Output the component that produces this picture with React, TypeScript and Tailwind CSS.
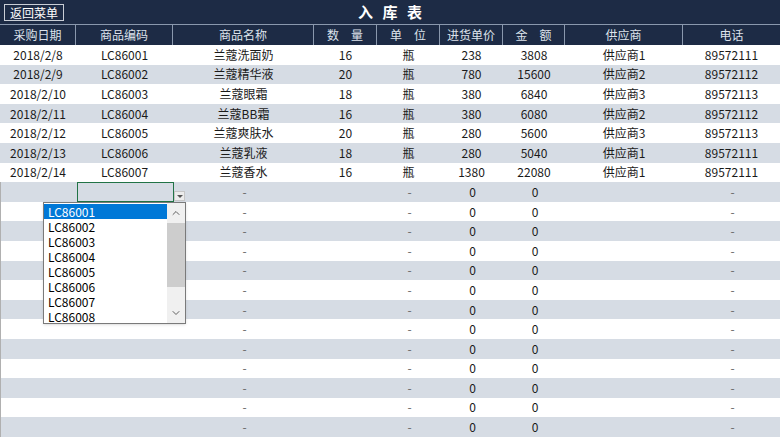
import { ChevronDown, ChevronUp } from "lucide-react";

type TRecord = {
  date: string;
  code: string;
  name: string;
  qty: number;
  unit: string;
  price: number;
  amount: number;
  supplier: string;
  phone: string;
};

const records: TRecord[] = [
  { date: "2018/2/8", code: "LC86001", name: "兰蔻洗面奶", qty: 16, unit: "瓶", price: 238, amount: 3808, supplier: "供应商1", phone: "89572111" },
  { date: "2018/2/9", code: "LC86002", name: "兰蔻精华液", qty: 20, unit: "瓶", price: 780, amount: 15600, supplier: "供应商2", phone: "89572112" },
  { date: "2018/2/10", code: "LC86003", name: "兰蔻眼霜", qty: 18, unit: "瓶", price: 380, amount: 6840, supplier: "供应商3", phone: "89572113" },
  { date: "2018/2/11", code: "LC86004", name: "兰蔻BB霜", qty: 16, unit: "瓶", price: 380, amount: 6080, supplier: "供应商2", phone: "89572112" },
  { date: "2018/2/12", code: "LC86005", name: "兰蔻爽肤水", qty: 20, unit: "瓶", price: 280, amount: 5600, supplier: "供应商3", phone: "89572113" },
  { date: "2018/2/13", code: "LC86006", name: "兰蔻乳液", qty: 18, unit: "瓶", price: 280, amount: 5040, supplier: "供应商1", phone: "89572111" },
  { date: "2018/2/14", code: "LC86007", name: "兰蔻香水", qty: 16, unit: "瓶", price: 1380, amount: 22080, supplier: "供应商1", phone: "89572111" },
];

const headers = ["采购日期", "商品编码", "商品名称", "数　量", "单　位", "进货单价", "金　额", "供应商", "电话"];

const codeOptions = ["LC86001", "LC86002", "LC86003", "LC86004", "LC86005", "LC86006", "LC86007", "LC86008"];

const emptyRows = 13;

const gridCols = "grid grid-cols-[76px_97px_141px_63px_63px_63px_62px_118px_97px]";

function CodeDropdown() {
  return (
    <div className="relative h-full border border-[#217346]">
      <div className="absolute right-[-12px] top-[8px] flex h-[10px] w-[11px] items-center justify-center border border-[#c6c6c6] bg-[#ececec]">
        <span className="block h-0 w-0 border-x-[3px] border-t-[3px] border-x-transparent border-t-[#555]" />
      </div>
      <div className="absolute left-[-35px] top-[19px] z-10 flex h-[122px] w-[143px] border border-[#7a7a7a] bg-white text-left shadow-sm">
        <div className="flex flex-1 flex-col pt-[1px]">
          {codeOptions.map((code, i) => (
            <div
              key={code}
              className={
                i === 0
                  ? "h-[15px] bg-[#0078d7] pl-[4px] text-[12px] leading-[15px] text-white"
                  : "h-[15px] pl-[4px] text-[12px] leading-[15px] text-black"
              }
            >
              {code}
            </div>
          ))}
        </div>
        <div className="flex w-[18px] flex-col bg-[#f0f0f0]">
          <div className="flex h-[20px] items-center justify-center">
            <ChevronUp className="size-[12px] text-[#606060]" strokeWidth={2} />
          </div>
          <div className="h-[64px] bg-[#cdcdcd]" />
          <div className="flex-1" />
          <div className="flex h-[20px] items-center justify-center">
            <ChevronDown className="size-[12px] text-[#606060]" strokeWidth={2} />
          </div>
        </div>
      </div>
    </div>
  );
}

export default function App() {
  return (
    <div className="h-[439px] w-[780px] overflow-hidden bg-white font-['Microsoft_YaHei','Noto_Sans_CJK_SC',sans-serif] text-[12px] text-[#1a1a1a]">
      <div className="relative flex h-[25px] items-center justify-center border-b border-[#8a98ad] bg-[#1d2b45]">
        <button className="absolute left-[4px] top-[4px] h-[17px] w-[60px] border border-[#c9ced6] text-[12px] leading-[15px] text-white">
          返回菜单
        </button>
        <h1 className="pl-[3px] text-[15px] font-bold tracking-[3px] text-white">入 库 表</h1>
      </div>

      <div className={`${gridCols} h-[20px] bg-[#1d2b45] text-[#dde3ec]`}>
        {headers.map((h, i) => (
          <div
            key={h}
            className={
              i < headers.length - 1
                ? "flex items-center justify-center border-r border-[#8a98ad] leading-none"
                : "flex items-center justify-center leading-none"
            }
          >
            {h}
          </div>
        ))}
      </div>

      {records.map((r, i) => (
        <div
          key={r.code}
          className={`${gridCols} h-[19.6px] items-center text-center leading-none ${
            i % 2 === 0 ? "bg-white" : "bg-[#d6dce4]"
          }`}
        >
          <div>{r.date}</div>
          <div>{r.code}</div>
          <div>{r.name}</div>
          <div>{r.qty}</div>
          <div>{r.unit}</div>
          <div>{r.price}</div>
          <div>{r.amount}</div>
          <div>{r.supplier}</div>
          <div>{r.phone}</div>
        </div>
      ))}

      {Array.from({ length: emptyRows }).map((_, i) => (
        <div
          key={i}
          className={`${gridCols} h-[19.6px] items-center border-l border-[#b0b0b0] text-center leading-none ${
            i % 2 === 0 ? "bg-[#d6dce4]" : "bg-white"
          }`}
        >
          <div />
          <div className="h-full">{i === 0 && <CodeDropdown />}</div>
          <div className="text-[#666]">-</div>
          <div />
          <div className="text-[#666]">-</div>
          <div>0</div>
          <div>0</div>
          <div />
          <div className="text-[#666]">-</div>
        </div>
      ))}
    </div>
  );
}
